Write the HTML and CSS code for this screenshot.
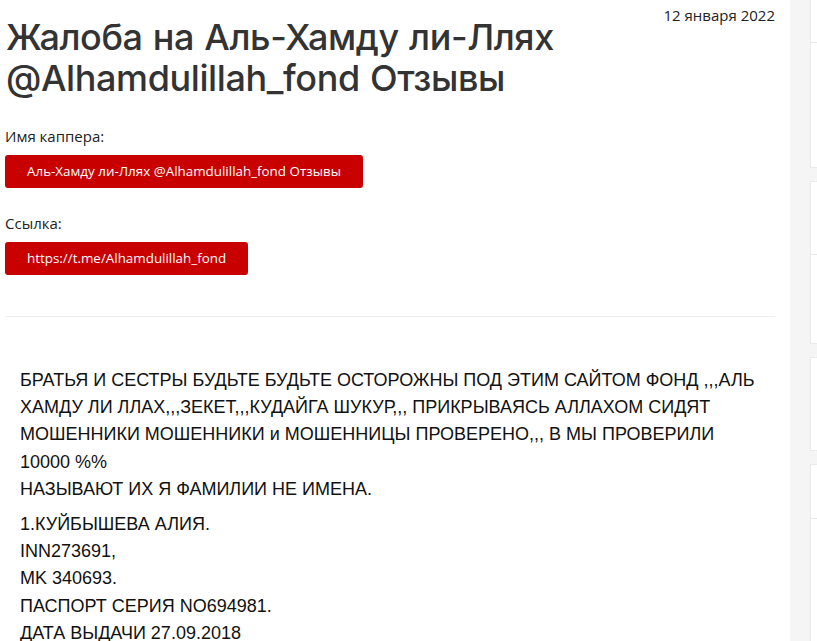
FILE: index.html
```html
<!DOCTYPE html>
<html lang="ru">
<head>
    <meta charset="UTF-8">
    <meta name="viewport" content="width=device-width, initial-scale=1.0">
    <title>Жалоба на Аль-Хамду ли-Ллях @Alhamdulillah_fond Отзывы</title>
    <link rel="stylesheet" href="styles.css">
</head>
<body>
    <div class="page">
        <div class="main">
            <div class="post-head">
                <h1>Жалоба на Аль-Хамду ли-Ллях @Alhamdulillah_fond Отзывы</h1>
                <span class="post-date">12 января 2022</span>
            </div>
            <div class="field">
                <div class="field-label">Имя каппера:</div>
                <a class="tag-button" href="#">Аль-Хамду ли-Ллях @Alhamdulillah_fond Отзывы</a>
            </div>
            <div class="field">
                <div class="field-label">Ссылка:</div>
                <a class="tag-button" href="#">https://t.me/Alhamdulillah_fond</a>
            </div>
            <hr class="divider">
            <div class="post-body">
                <p>БРАТЬЯ И СЕСТРЫ БУДЬТЕ БУДЬТЕ ОСТОРОЖНЫ ПОД ЭТИМ САЙТОМ ФОНД ,,,АЛЬ ХАМДУ ЛИ ЛЛАХ,,,ЗЕКЕТ,,,КУДАЙГА ШУКУР,,, ПРИКРЫВАЯСЬ АЛЛАХОМ СИДЯТ МОШЕННИКИ МОШЕННИКИ и МОШЕННИЦЫ ПРОВЕРЕНО,,, В МЫ ПРОВЕРИЛИ 10000 %%<br>НАЗЫВАЮТ ИХ Я ФАМИЛИИ НЕ ИМЕНА.</p>
                <p>1.КУЙБЫШЕВА АЛИЯ.<br>INN273691,<br>MK 340693.<br>ПАСПОРТ СЕРИЯ NO694981.<br>ДАТА ВЫДАЧИ 27.09.2018</p>
            </div>
        </div>
        <aside class="sidebar">
            <div class="side-card">
                <div class="side-row top-1"></div>
                <div class="side-row bottom-1"></div>
            </div>
            <div class="side-card">
                <div class="side-row top-2"></div>
                <div class="side-row bottom-2"></div>
            </div>
            <div class="side-card">
                <div class="side-row bottom-3"></div>
            </div>
            <div class="side-card">
                <div class="side-row top-4"></div>
                <div class="side-row bottom-4"></div>
            </div>
        </aside>
    </div>
</body>
</html>
```

FILE: styles.css
```css
body {
    margin: 0;
    font-family: 'Open Sans', 'Noto Sans', sans-serif;
    background: white;
    color: #222;
    overflow: hidden;
}

.page {
    display: flex;
    height: 641px;
}

.main {
    flex: 0 0 770px;
    padding-left: 5px;
}

.post-head {
    display: flex;
    align-items: flex-start;
    gap: 20px;
}

.post-head h1 {
    flex: 1;
    margin: 17px 0 0 1px;
    font-family: 'Inter', sans-serif;
    font-size: 36px;
    font-weight: 500;
    line-height: 41px;
    letter-spacing: -0.4px;
    word-spacing: 1px;
    color: #333;
}

.post-date {
    margin-top: 5px;
    font-size: 15px;
    color: #222;
    white-space: nowrap;
}

.field {
    margin-top: 27px;
}

.field + .field {
    margin-top: 25px;
}

.field-label {
    font-size: 15px;
    line-height: 20px;
    color: #222;
    margin-bottom: 9px;
}

.tag-button {
    display: inline-block;
    padding: 0 22px;
    height: 33px;
    line-height: 33px;
    background: #c80000;
    color: white;
    font-size: 13.4px;
    text-decoration: none;
    border-radius: 3px;
}

.divider {
    margin: 41px 0 0;
    border: none;
    border-top: 1px solid #eeeeee;
}

.post-body {
    padding: 50px 15px 0 15px;
    font-family: 'Liberation Sans', Arial, sans-serif;
    font-size: 18px;
    line-height: 27.2px;
    color: #111;
}

.post-body p {
    margin: 0 0 8px;
}

.sidebar {
    flex: 1;
    margin-left: 15px;
    background: #f5f5f5;
    padding-left: 20px;
}

.side-card {
    background: white;
    border: 1px solid #eaeaea;
    border-right: none;
    margin-bottom: 13px;
}

.side-card:first-child {
    border-top: none;
}

.side-row + .side-row {
    border-top: 1px solid #eaeaea;
}

.top-1 {
    height: 42px;
}

.bottom-1 {
    height: 124px;
}

.top-2 {
    height: 72px;
}

.bottom-2 {
    height: 88px;
}

.bottom-3 {
    height: 92px;
}

.top-4 {
    height: 53px;
}

.bottom-4 {
    height: 140px;
}
```
